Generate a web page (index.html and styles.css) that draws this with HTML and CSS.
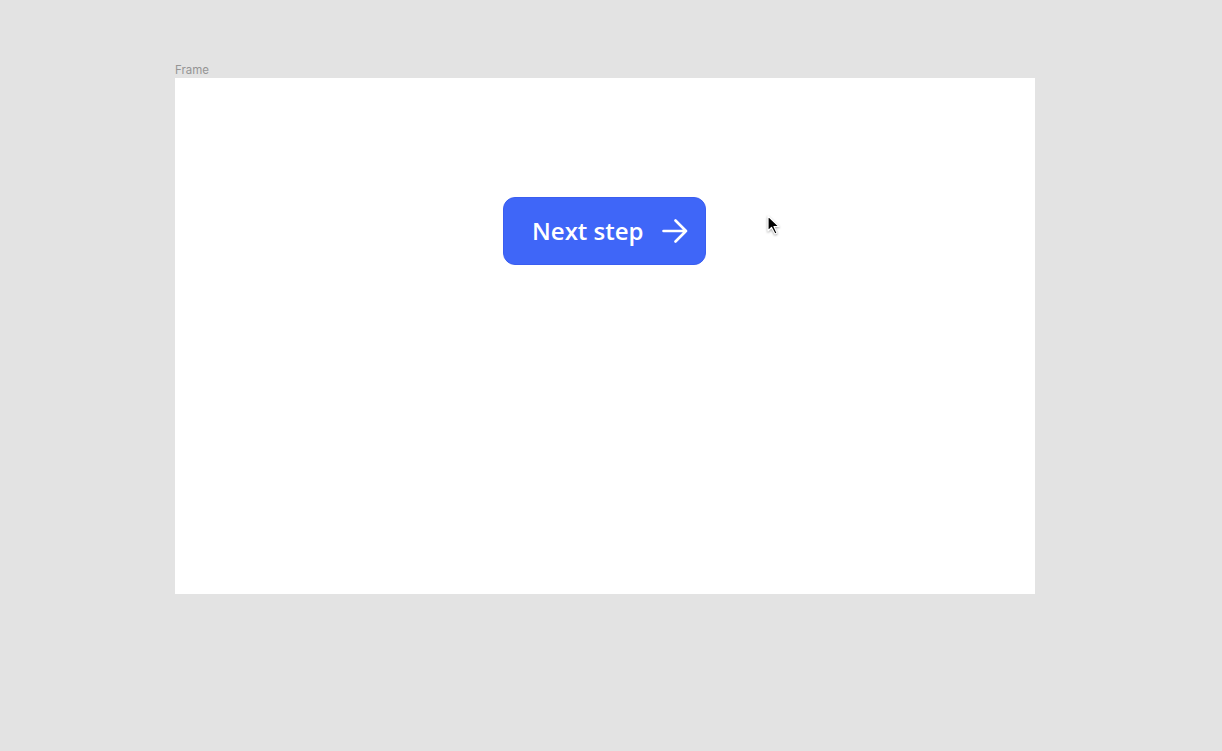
FILE: index.html
```html
<!DOCTYPE html>
<html>
<head>
<link rel="stylesheet" href="styles.css">
</head>
<body>
<div class="canvas">
  <div class="label">Frame</div>
  <div class="frame">
    <button class="next">
      <span class="caption">Next step</span>
      <svg class="arrow" width="26" height="24" viewBox="0 0 26 24">
        <path d="M1.5 12H24M13.5 1.5L24 12L13.5 22.5" fill="none" stroke="#fff" stroke-width="2.6" stroke-linecap="round" stroke-linejoin="round"/>
      </svg>
    </button>
  </div>
</div>
<svg class="cursor" width="18" height="22" viewBox="0 0 18 22">
  <path d="M2 1L2 16L5.5 12.5L9 19L11 18L8 11.5L13 11.5Z" fill="#000" stroke="#fff" stroke-width="1.2" stroke-linejoin="round"/>
</svg>
</body>
</html>
```
FILE: styles.css
```css
body{
margin:0;
background:#e3e3e3;
font-family:'Open Sans', sans-serif;
}
.canvas{
padding:63px 0 0 175px;
}
.label{
font-family:Inter, sans-serif;
font-size:11.5px;
color:#959595;
line-height:14px;
margin-bottom:1px;
}
.frame{
width:860px;
height:516px;
background:#fff;
display:flex;
justify-content:center;
align-items:flex-start;
padding-top:119px;
box-sizing:border-box;
}
.next{
display:flex;
align-items:center;
justify-content:space-between;
height:68px;
width:203px;
padding:0 17px 0 28px;
background:#3f66f8;
border:1px solid #3a5ef0;
border-radius:12px;
color:#fff;
font-family:'Open Sans', sans-serif;
font-weight:600;
font-size:24px;
box-sizing:border-box;
margin-left:-1px;
}
.caption{
white-space:nowrap;
margin-top:-2px;
}
.arrow{
display:block;
}
.cursor{
position:absolute;
left:766px;
top:215px;
filter:drop-shadow(0 1px 1px rgba(0,0,0,0.35));
}
```
